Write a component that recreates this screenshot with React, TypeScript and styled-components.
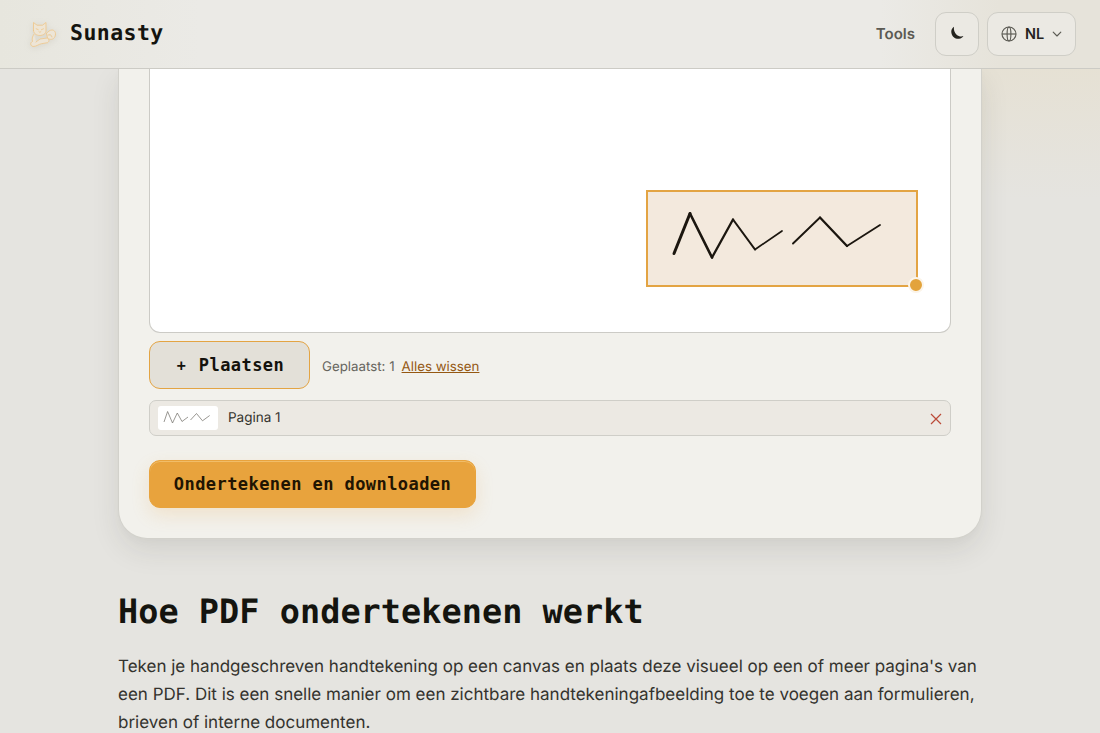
import React from "react";
import styled, { createGlobalStyle, css } from "styled-components";

const sans = `Inter, "Liberation Sans", sans-serif`;
const mono = `"DejaVu Sans Mono", "Liberation Mono", monospace`;

const GlobalStyle = createGlobalStyle`
  * { box-sizing: border-box; }
  html, body { margin: 0; height: 100%; overflow: hidden; }
  body {
    font-family: ${sans};
    text-rendering: geometricPrecision;
    color: #14140f;
    background:
      radial-gradient(ellipse 480px 200px at 1060px 0, rgba(232, 216, 178, 0.4), rgba(232, 216, 178, 0) 100%),
      #e5e4e0;
  }
`;

const Page = styled.div`
  display: flex;
  flex-direction: column;
  height: 733px;
  overflow: hidden;
`;

const Header = styled.header`
  position: relative;
  z-index: 2;
  flex: none;
  height: 69px;
  display: flex;
  align-items: center;
  justify-content: space-between;
  padding: 0 24px 1px 24px;
  border-bottom: 1px solid #cccbc5;
  background: linear-gradient(90deg, #e7e6de 0, #ebeae6 200px, #ebeae6 880px, #e6e3da 1000px, #e6e3da 100%);
`;

const Brand = styled.div`
  display: flex;
  align-items: center;
  gap: 12px;
  font: 700 21.5px/32px ${mono};
  letter-spacing: 0.45px;
  svg { display: block; filter: drop-shadow(0 1px 3px rgba(150, 140, 120, 0.2)); }
`;

const Nav = styled.nav`
  display: flex;
  align-items: center;
`;

const NavLink = styled.span`
  margin-right: 20px;
  font-size: 15px;
  font-weight: 600;
  color: #5b5a53;
`;

const HeaderButton = styled.button<{ $width: number }>`
  width: ${(p) => p.$width}px;
  height: 44px;
  margin: 0 0 0 ${(p) => (p.$width > 44 ? 8 : 0)}px;
  padding: 0;
  display: flex;
  align-items: center;
  justify-content: center;
  gap: 8px;
  border: 1px solid #cfcec7;
  border-radius: 11px;
  background: #ebe9e3;
  color: #24231e;
  font: 600 14.5px/20px ${sans};
`;

const Card = styled.section`
  flex: none;
  width: 864px;
  height: 470px;
  margin: 0 0 0 118px;
  padding: 0 30px;
  border: 1px solid #d2d1cb;
  border-top: 0;
  border-radius: 0 0 29px 29px;
  background: #f2f1ec;
  box-shadow: 0 12px 28px rgba(50, 48, 38, 0.1), 0 3px 8px rgba(50, 48, 38, 0.02);
`;

const Sheet = styled.div`
  position: relative;
  height: 264px;
  width: 802px;
  border: 1px solid #cccbc6;
  border-top: 0;
  border-radius: 0 0 11px 11px;
  background: #fff;
`;

const Placement = styled.div`
  position: absolute;
  left: 496px;
  top: 121px;
  width: 272px;
  height: 97px;
  border: 2px solid #e3a443;
  background: #f3e9dd;
  svg { display: block; }
`;

const Handle = styled.span`
  position: absolute;
  right: -8px;
  bottom: -8px;
  width: 16px;
  height: 16px;
  border: 2px solid #fbf4e9;
  border-radius: 50%;
  background: #e3a33b;
`;

const PlaceRow = styled.div`
  display: flex;
  align-items: center;
  margin-top: 8px;
`;

const ActionButton = styled.button<{ $primary?: boolean }>`
  display: flex;
  align-items: center;
  justify-content: center;
  height: 48px;
  width: ${(p) => (p.$primary ? 327 : 161)}px;
  padding: 0 0 1px;
  border: 1px solid #e3a443;
  border-radius: 11px;
  font: 700 17px/24px ${mono};
  letter-spacing: 0.43px;
  white-space: pre;
  color: #14120c;
  background: #e3e0d8;
  ${(p) =>
    p.$primary &&
    css`
      margin-top: 24px;
      border-color: #e8a33d;
      background: #e8a33d;
      color: #211402;
      box-shadow: inset 0 1px 0 rgba(255, 228, 170, 0.4), 0 7px 18px rgba(232, 163, 61, 0.18);
    `}
`;

const Plus = styled.span`
  margin: 2px 13px 0 2px;
  font-size: 15px;
  letter-spacing: 0;
`;

const Count = styled.span`
  margin: 3px 0 0 12px;
  font-size: 13.3px;
  line-height: 20px;
  color: #66655e;
`;

const ClearLink = styled.span`
  margin: 3px 0 0 7px;
  font-size: 13.3px;
  line-height: 20px;
  color: #955812;
  text-decoration: underline;
`;

const PlacedItem = styled.div`
  display: flex;
  align-items: center;
  width: 802px;
  height: 36px;
  margin-top: 11px;
  padding: 0 8px 1px 8px;
  border: 1px solid #cfcec8;
  border-radius: 7px;
  background: #ece9e3;
  font-size: 13.5px;
  color: #34332d;
`;

const Thumb = styled.span`
  width: 60px;
  height: 24px;
  margin-right: 10px;
  border-radius: 3px;
  background: #fff;
  svg { display: block; }
`;

const RemoveIcon = styled.svg`
  margin: 2px 0 0 auto;
`;

const Article = styled.article`
  margin: 53px 0 0 118px;
  width: 863px;
`;

const Title = styled.h2`
  margin: 0;
  font: 700 33.5px/40px ${mono};
  letter-spacing: 0.05px;
  color: #14140f;
`;

const Body = styled.p`
  margin: 21px 0 0;
  font-size: 17px;
  line-height: 28px;
  color: #34332e;
  white-space: nowrap;
`;

const CatLogo = () => (
  <svg width="34" height="34" viewBox="0 0 34 34" fill="none" stroke="#efc78d" strokeWidth=".85" strokeLinejoin="round" strokeLinecap="round">
    <path d="M9.5 13.5V5.5l3.5 2.7h5.5L22 5.5v8.5c0 2.7-3 4.5-6.2 4.5s-6.3-2-6.3-5Z" fill="#eee5d5" />
    <path d="m12.2 11.8 2 .8m5.3-.8-2 .8m-2.6 2 1 .8 1-.8" />
    <path d="M10 17c-2 3-2 5-1.5 7.5-2.5 1-2.5 4 .5 5 3.500 0 5-2 8.500-2.800l6-1c2-1 2-4-.5-4.700l-7 1-4 3" fill="#ede5d7" />
    <path d="M22.500 16.500l1 4.500c2 2 6 2 7.500-1.500 1.500-4-.5-6.500-3-6.500-2 0-4 1.500-5.500 3.500M24 18c2-1 4 0 4 2" fill="#ede5d7" />
  </svg>
);

const MoonIcon = () => (
  <svg width="16" height="16" viewBox="0 0 16 16">
    <path d="M5 .8C2.800 2.200 1.900 4.500 2.400 6.900c.8 3.900 4 6.300 7.600 5.900 2.100-.2 3.700-1.200 4.400-2.700-2.200.8-4.900.3-6.800-1.400C5.400 6.700 4.500 3.600 5 .8Z" fill="#24231e" />
  </svg>
);

const GlobeIcon = () => (
  <svg width="16" height="16" viewBox="0 0 16 16" fill="none" stroke="#5b5a53" strokeWidth="1.15">
    <circle cx="8" cy="8" r="7" />
    <ellipse cx="8" cy="8" rx="1.900" ry="7" />
    <path d="M1 8h14" />
  </svg>
);

const Chevron = () => (
  <svg width="10" height="10" viewBox="0 0 10 10" fill="none" stroke="#5b5a53" strokeWidth="1.15" strokeLinecap="round" strokeLinejoin="round">
    <path d="m1.200 3.200 3.800 3.800 3.800-3.800" />
  </svg>
);

const Signature = () => (
  <svg width="268" height="93" viewBox="648 192 268 93" fill="none" stroke="#1b160f" strokeLinejoin="round" strokeLinecap="round">
    <path d="m674 253.5 16-40" strokeWidth="3" />
    <path d="m690 213.5 22 44" strokeWidth="2.6" />
    <path d="m712 257.5 21-38" strokeWidth="2.3" />
    <path d="m733 219.5 22 30" strokeWidth="2.1" />
    <path d="m755 249.5 27-18.5" strokeWidth="1.7" />
    <path d="m793 243.5 27-26" strokeWidth="1.9" />
    <path d="m820 217.5 27 28.5" strokeWidth="2.3" />
    <path d="m847 246 33-21" strokeWidth="1.8" />
  </svg>
);

const MiniSignature = () => (
  <svg width="60" height="24" viewBox="0 0 60 24" fill="none" stroke="#77746e" strokeWidth=".75" strokeLinejoin="round">
    <path d="m6 16 3.600-10.500 4.900 11.500L19.300 7l4.700 8.500 6-4.500m2.500 3 6-6.500 6 7.300 7.200-5.300" />
  </svg>
);

export default function App() {
  return (
    <>
      <GlobalStyle />
      <Page>
        <Header>
          <Brand>
            <CatLogo />
            Sunasty
          </Brand>
          <Nav>
            <NavLink>Tools</NavLink>
            <HeaderButton $width={44} aria-label="Thema">
              <MoonIcon />
            </HeaderButton>
            <HeaderButton $width={89}>
              <GlobeIcon />
              NL
              <Chevron />
            </HeaderButton>
          </Nav>
        </Header>
        <Card>
          <Sheet>
            <Placement>
              <Signature />
              <Handle />
            </Placement>
          </Sheet>
          <PlaceRow>
            <ActionButton>
              <Plus>+</Plus>Plaatsen
            </ActionButton>
            <Count>Geplaatst: 1</Count>
            <ClearLink>Alles wissen</ClearLink>
          </PlaceRow>
          <PlacedItem>
            <Thumb>
              <MiniSignature />
            </Thumb>
            Pagina 1
            <RemoveIcon width="12" height="12" viewBox="0 0 12 12" fill="none" stroke="#bb4a38" strokeWidth="1.2">
              <path d="m1 1 10 10M11 1 1 11" />
            </RemoveIcon>
          </PlacedItem>
          <ActionButton $primary>Ondertekenen en downloaden</ActionButton>
        </Card>
        <Article>
          <Title>Hoe PDF ondertekenen werkt</Title>
          <Body>
            Teken je handgeschreven handtekening op een canvas en plaats deze visueel op een of meer pagina's van
            <br />
            een PDF. Dit is een snelle manier om een zichtbare handtekeningafbeelding toe te voegen aan formulieren,
            <br />
            brieven of interne documenten.
          </Body>
        </Article>
      </Page>
    </>
  );
}
